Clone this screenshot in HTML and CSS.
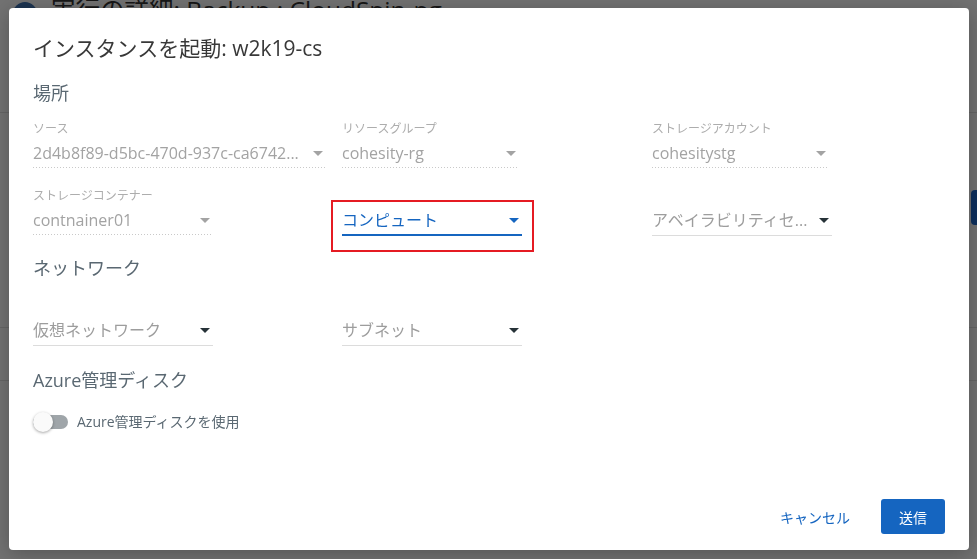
FILE: index.html
```html
<!DOCTYPE html>
<html lang="ja">
<head>
  <meta charset="UTF-8">
  <title>インスタンスを起動</title>
  <link rel="stylesheet" href="styles.css">
</head>
<body>
<div class="page">
  <div class="page_head">
    <span class="page_icon"></span>
    <h1 class="page_title">実行の詳細: Backup : CloudSpin-pg</h1>
  </div>
  <div class="page_row"></div>
  <div class="page_tools"><span class="page_btn"></span></div>
  <div class="page_row page_row_b"></div>
  <div class="page_row page_row_c"></div>
</div>

<div class="overlay">
  <div class="dialog">
    <h2 class="dialog_title">インスタンスを起動: w2k19-cs</h2>

    <h3 class="group_title">場所</h3>
    <div class="fields">
      <div class="field wide disabled">
        <label class="field_label">ソース</label>
        <div class="select"><span class="value">2d4b8f89-d5bc-470d-937c-ca6742...</span><span class="arrow"></span></div>
      </div>
      <div class="field short disabled">
        <label class="field_label">リソースグループ</label>
        <div class="select"><span class="value">cohesity-rg</span><span class="arrow"></span></div>
      </div>
      <div class="field short disabled">
        <label class="field_label">ストレージアカウント</label>
        <div class="select"><span class="value">cohesitystg</span><span class="arrow"></span></div>
      </div>

      <div class="field disabled row2">
        <label class="field_label">ストレージコンテナー</label>
        <div class="select"><span class="value">contnainer01</span><span class="arrow"></span></div>
      </div>
      <div class="field focused marked row2">
        <div class="select"><span class="value">コンピュート</span><span class="arrow"></span></div>
      </div>
      <div class="field row2">
        <div class="select"><span class="value placeholder">アベイラビリティセ...</span><span class="arrow"></span></div>
      </div>
    </div>

    <h3 class="group_title">ネットワーク</h3>
    <div class="fields no_labels">
      <div class="field">
        <div class="select"><span class="value placeholder">仮想ネットワーク</span><span class="arrow"></span></div>
      </div>
      <div class="field">
        <div class="select"><span class="value placeholder">サブネット</span><span class="arrow"></span></div>
      </div>
    </div>

    <h3 class="group_title">Azure管理ディスク</h3>
    <div class="toggle_row">
      <span class="toggle"><span class="knob"></span></span>
      <span class="toggle_label">Azure管理ディスクを使用</span>
    </div>

    <div class="dialog_footer">
      <button class="btn btn_text">キャンセル</button>
      <button class="btn btn_primary">送信</button>
    </div>
  </div>
</div>
</body>
</html>
```

FILE: styles.css
```css
html, body {
  margin: 0;
  padding: 0;
}

body {
  width: 977px;
  height: 559px;
  overflow: hidden;
  font-family: "Open Sans", "Noto Sans CJK JP", sans-serif;
  background: #ffffff;
}

/* page behind the dialog */
.page {
  height: 559px;
  background: #ffffff;
}

.page_head {
  display: flex;
  align-items: center;
  gap: 14px;
  height: 28px;
  padding-left: 13px;
}

.page_icon {
  width: 24px;
  height: 24px;
  border-radius: 50%;
  background: #3f74b4;
}

.page_title {
  margin: 0;
  font-size: 24.5px;
  font-weight: 400;
  line-height: 28px;
  color: #333333;
  position: relative;
  top: -4px;
}

.page_row {
  margin-top: 84px;
  border-top: 1px solid #e3e3e3;
}

.page_tools {
  display: flex;
  justify-content: flex-end;
  margin-top: 77px;
  margin-right: -40px;
}

.page_btn {
  width: 46px;
  height: 35px;
  border-radius: 4px;
  background: #1e6ad0;
}

.page_row_b {
  margin-top: 102px;
}

.page_row_c {
  margin-top: 52px;
}

/* overlay + dialog */
.overlay {
  position: fixed;
  top: 0;
  left: 0;
  right: 0;
  bottom: 0;
  padding: 8px 0 0 9px;
  background: rgba(0, 0, 0, 0.555);
}

.dialog {
  display: flex;
  flex-direction: column;
  box-sizing: border-box;
  width: 960px;
  height: 542px;
  padding: 26px 24px 16px 24px;
  border-radius: 4px;
  background: #ffffff;
  box-shadow: 0 4px 20px rgba(0, 0, 0, 0.25);
}

.dialog_title {
  margin: 0;
  font-size: 21px;
  font-weight: 400;
  line-height: 28px;
  color: #383838;
}

.group_title {
  margin: 19px 0 0;
  font-size: 18px;
  font-weight: 400;
  line-height: 24px;
  color: #5a6872;
}

.fields {
  display: grid;
  grid-template-columns: 309px 310px 180px;
  align-items: end;
  row-gap: 19px;
  margin-top: 16px;
}

.fields + .group_title {
  margin-top: 20px;
}

.fields.no_labels {
  margin-top: 35px;
}

.no_labels + .group_title {
  margin-top: 22px;
}

.field {
  position: relative;
  width: 180px;
}

.field.wide {
  width: 293px;
}

.field.short {
  width: 177px;
}

.field_label {
  display: block;
  margin-bottom: 1px;
  font-size: 12px;
  line-height: 16px;
  color: #adadad;
}

.select {
  display: flex;
  align-items: center;
  gap: 6px;
  padding: 3px 0;
  border-bottom: 1px solid #dcdcdc;
}

.value {
  flex: 1;
  min-width: 0;
  overflow: hidden;
  white-space: nowrap;
  text-overflow: ellipsis;
  font-size: 16px;
  line-height: 24px;
  color: #333333;
}

.value.placeholder {
  color: #9d9d9d;
}

.arrow {
  width: 0;
  height: 0;
  margin-right: 3px;
  border-left: 5px solid transparent;
  border-right: 5px solid transparent;
  border-top: 5px solid #263238;
}

.disabled .value {
  color: #a3a3a3;
}

.disabled .arrow {
  border-top-color: #a3a3a3;
}

.disabled .select {
  border-bottom: 1px solid transparent;
  background: linear-gradient(to right, #c9c9c9 1px, transparent 1px) left bottom / 3px 1px repeat-x;
}

.focused .select {
  padding-bottom: 2px;
  border-bottom: 2px solid #1565c0;
}

.focused .value {
  color: #1565c0;
}

.focused .arrow {
  border-top-color: #1565c0;
}

/* red annotation box */
.marked::after {
  content: "";
  position: absolute;
  top: -5px;
  left: -11px;
  right: -12px;
  bottom: -16px;
  border: 2px solid #e51b23;
}

.toggle_row {
  display: flex;
  align-items: center;
  gap: 9px;
  margin-top: 20px;
  height: 20px;
}

.toggle {
  display: flex;
  align-items: center;
  width: 35px;
  height: 14px;
  border-radius: 7px;
  background: #9fa5a9;
}

.knob {
  width: 20px;
  height: 20px;
  border-radius: 50%;
  background: #fafafa;
  box-shadow: 0 1px 3px rgba(0, 0, 0, 0.35);
}

.toggle_label {
  font-size: 14px;
  line-height: 20px;
  color: #5a6872;
}

.dialog_footer {
  display: flex;
  justify-content: flex-end;
  align-items: center;
  gap: 15px;
  margin-top: auto;
}

.btn {
  height: 35px;
  padding: 0 16px;
  border: none;
  border-radius: 3px;
  font-family: inherit;
  font-size: 14px;
  background: transparent;
}

.btn_text {
  color: #1565c0;
}

.btn_primary {
  padding: 0 18px;
  color: #ffffff;
  background: #1565c0;
}
```
